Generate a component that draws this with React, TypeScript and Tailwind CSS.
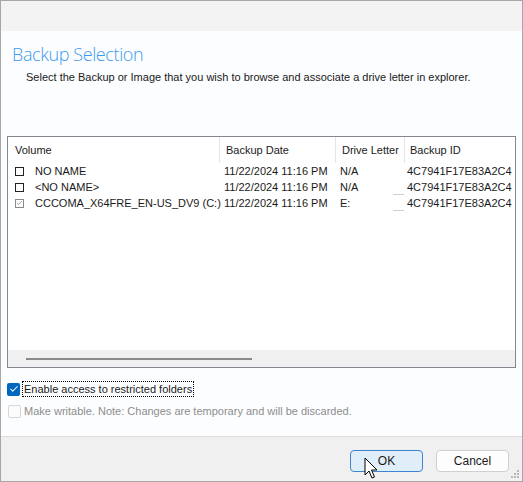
import { Check } from "lucide-react"

const rows = [
  { name: "NO NAME", date: "11/22/2024 11:16 PM", drive: "N/A", id: "4C7941F17E83A2C4", checked: false, tick: false },
  { name: "<NO NAME>", date: "11/22/2024 11:16 PM", drive: "N/A", id: "4C7941F17E83A2C4", checked: false, tick: true },
  { name: "CCCOMA_X64FRE_EN-US_DV9 (C:)", date: "11/22/2024 11:16 PM", drive: "E:", id: "4C7941F17E83A2C4", checked: true, tick: true },
]

const App = () => {
  return (
    <div className="relative w-[523px] h-[482px] border border-[#a7a7a7] flex flex-col bg-[#fcfdfe] text-[11px] text-[#1a1a1a] font-['Liberation_Sans',Arial,sans-serif] whitespace-nowrap overflow-hidden">
      {/* title bar strip */}
      <div className="h-[30px] bg-[#f3f3f3] shrink-0"></div>

      {/* main content */}
      <div className="flex-1 flex flex-col">
        <div className="pt-[10px] pl-[11px] text-[18px] tracking-[-0.4px] leading-[26px] font-light text-[#3d9bf0] font-['Open_Sans',sans-serif]">Backup Selection</div>
        <div className="pl-[25px] leading-[16px] mt-[2px]">Select the Backup or Image that you wish to browse and associate a drive letter in explorer.</div>

        {/* list box */}
        <div className="ml-[6px] mt-[51px] w-[509px] h-[232px] border border-[#828790] bg-white flex flex-col">
          <div className="flex h-[26px] items-center">
            <div className="w-[211px] h-full flex items-center pl-[7px]">Volume</div>
            <div className="w-[116px] h-full flex items-center pl-[6px] border-l border-[#e5e5e5]">Backup Date</div>
            <div className="w-[69px] h-full flex items-center pl-[6px] border-l border-[#e5e5e5]">Drive Letter</div>
            <div className="flex-1 h-full flex items-center pl-[5px] border-l border-[#e5e5e5]">Backup ID</div>
          </div>
          <div className="flex-1 flex flex-col">
            {rows.map((r, i) => (
              <div key={i} className="flex h-[16px] items-center leading-[16px]">
                <div className="w-[211px] flex items-center pl-[7px]">
                  <span className={`w-[9px] h-[9px] border flex items-center justify-center ${r.checked ? "border-[#8a8a8a]" : "border-[#222]"}`}>
                    {r.checked && <Check size={8} strokeWidth={2.5} className="text-[#777]" />}
                  </span>
                  <span className="ml-[11px]">{r.name}</span>
                </div>
                <div className="w-[117px] pl-[5px]">{r.date}</div>
                <div className="w-[68px] pl-[4px] h-full flex justify-between">
                  <span>{r.drive}</span>
                  {r.tick && <span className="w-[11px] self-end border-b border-[#d0d0d0]"></span>}
                </div>
                <div className="flex-1 pl-[3px]">{r.id}</div>
              </div>
            ))}
          </div>
          {/* horizontal scrollbar */}
          <div className="h-[17px] bg-[#f0f0f0] flex items-center pl-[18px]">
            <div className="w-[226px] h-[2px] bg-[#8a8a8a]"></div>
          </div>
        </div>

        {/* options */}
        <div className="mt-[13px] pl-[6px] flex items-center">
          <span className="w-[13px] h-[13px] rounded-[2px] bg-[#0067c0] flex items-center justify-center">
            <Check size={10} strokeWidth={2.5} className="text-white" />
          </span>
          <span className="ml-[2px] px-[1px] leading-[14px] border border-dotted border-black">Enable access to restricted folders</span>
        </div>
        <div className="mt-[6px] pl-[7px] flex items-center text-[#8d8d8d]">
          <span className="w-[13px] h-[13px] rounded-[2px] border border-[#d6d6d6] bg-[#fcfcfc]"></span>
          <span className="ml-[3px]">Make writable. Note: Changes are temporary and will be discarded.</span>
        </div>
      </div>

      {/* footer */}
      <div className="h-[45px] shrink-0 bg-[#f0f0f0] border-t border-[#dcdcdc] flex justify-end items-start pt-[13px] pr-[13px] gap-[13px]">
        <button className="w-[73px] h-[22px] rounded-[4px] border border-[#3f84d0] bg-[#e0eef9] text-[12px] leading-none">OK</button>
        <button className="w-[73px] h-[22px] rounded-[4px] border border-[#d0d0d0] bg-[#fdfdfd] text-[12px] leading-none">Cancel</button>
      </div>

      {/* resize grip */}
      <svg className="absolute right-[2px] bottom-[2px]" width="10" height="10" viewBox="0 0 10 10">
        <rect x="7" y="1" width="2" height="2" fill="#b8b8b8" />
        <rect x="4" y="4" width="2" height="2" fill="#b8b8b8" />
        <rect x="7" y="4" width="2" height="2" fill="#b8b8b8" />
        <rect x="1" y="7" width="2" height="2" fill="#b8b8b8" />
        <rect x="4" y="7" width="2" height="2" fill="#b8b8b8" />
        <rect x="7" y="7" width="2" height="2" fill="#b8b8b8" />
      </svg>

      {/* mouse cursor */}
      <svg className="absolute left-[363px] top-[456px]" width="14" height="24" viewBox="0 0 14 24">
        <path d="M1 1 L1 18 L5 14 L8 21 L10.5 20 L7.5 13 L13 13 Z" fill="white" stroke="black" strokeWidth="1" strokeLinejoin="round" />
      </svg>
    </div>
  )
}

export default App
